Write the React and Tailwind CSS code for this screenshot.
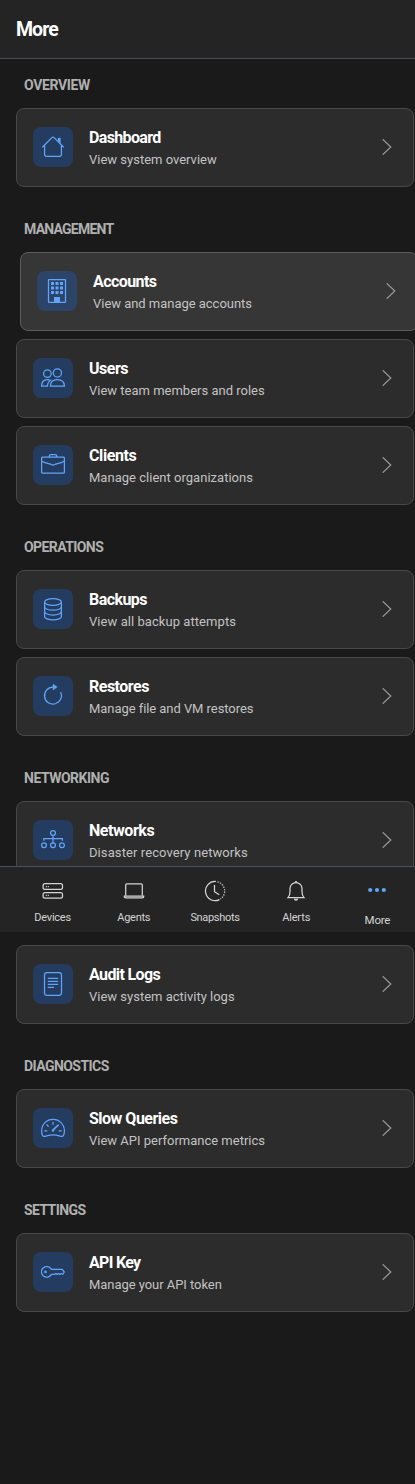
import React from 'react';

const HomeIcon = () => (
  <>
    <path d="M1.3 12.3 10.9 2.6a1.5 1.5 0 0 1 2.2 0l9.6 9.7" />
    <path d="M3.6 10.3v9.2a1.8 1.8 0 0 0 1.8 1.8h13.2a1.8 1.8 0 0 0 1.8-1.8v-9.2" />
    <path d="M17 3h2.4v5.2L17 5.8z" fill="currentColor" strokeWidth="0.4" />
  </>
);

const BuildingIcon = () => (
  <>
    <rect x="3.5" y="0.6" width="17" height="22.8" rx="0.6" />
    <path
      d="M6 3h3v3H6zM10.5 3h3v3h-3zM15 3h3v3h-3zM6 7.5h3v3H6zM10.5 7.5h3v3h-3zM15 7.5h3v3h-3zM6 12h3v3H6zM10.5 12h3v3h-3zM15 12h3v3h-3zM9 18h6v5.5H9z"
      fill="currentColor"
      stroke="none"
    />
  </>
);

const UsersIcon = () => (
  <>
    <circle cx="16.4" cy="6.9" r="4.1" />
    <circle cx="6.4" cy="7.6" r="3.8" />
    <path d="M9.4 20.2c0-4 2.6-6.7 7-6.7s7 2.7 7 6.7z" />
    <path d="M9.6 14.2c-1-.5-2-.7-3.2-.7-3.6 0-5.8 2.5-5.8 6.7h5.9c0-2.8 1.1-4.8 3.1-6z" />
  </>
);

const BriefcaseIcon = () => (
  <>
    <rect x="0.6" y="4.2" width="22.8" height="16" rx="1.2" />
    <path d="M8.3 4.2V3a1.5 1.5 0 0 1 1.5-1.5h4.4A1.5 1.5 0 0 1 15.7 3v1.2" />
    <path d="M.6 8.3c3.4 1.7 6.6 2.3 9 2.9.8.2 1 .8 2.4.8s1.6-.6 2.4-.8c2.4-.6 5.6-1.2 9-2.9" />
  </>
);

const DatabaseIcon = () => (
  <>
    <ellipse cx="12" cy="5" rx="8.4" ry="3.3" />
    <path d="M3.6 5v14.5c0 1.900 3.700 3.400 8.400 3.400s8.400-1.500 8.400-3.400V5" />
    <path d="M3.600 9.800c0 1.900 3.700 3.400 8.400 3.400s8.400-1.500 8.400-3.400M3.600 14.600c0 1.900 3.700 3.400 8.400 3.400s8.400-1.500 8.400-3.400" />
  </>
);

const RestoreIcon = () => (
  <>
    <path d="M13 3.1h-1a8.500 8.500 0 1 0 7.700 4.900" />
    <path d="M12 .1v6L16.300 3.100z" fill="currentColor" strokeWidth="0.4" />
  </>
);

const NetworkIcon = () => (
  <>
    <circle cx="12" cy="5" r="2.4" />
    <circle cx="3" cy="17.300" r="2.400" />
    <circle cx="12" cy="17.300" r="2.400" />
    <circle cx="21" cy="17.300" r="2.400" />
    <path d="M12 7.500v7.300M2.800 12.800v-2.100h18.600v2.100" />
  </>
);

const DocumentIcon = () => (
  <>
    <rect x="3.5" y="0.6" width="17" height="22.8" rx="2.3" />
    <path d="M6.800 6.300h10.400M6.800 9.300h10.400M6.800 12.300h10.400M6.800 15.400h6.200" />
  </>
);

const GaugeIcon = () => (
  <>
    <path d="M2.900 20.400C1.300 20.500.6 17.300.6 14.800.6 8.300 5.700 3.300 12 3.300s11.400 5 11.400 11.500c0 2.500-.7 5.700-2.300 5.600-2.300-.1-4.400-1.500-9.100-1.500s-6.800 1.400-9.100 1.500z" />
    <path d="M12 5.800v3M5.600 8.500l2 2.200M3.300 14.800h3M17.700 14.800h3" />
    <path d="m17.700 8.600-5.900 5.600M13.200 13.100l-1.500 1.900" strokeWidth="1.600" />
    <circle cx="12" cy="14.600" r="1.200" fill="currentColor" stroke="none" />
  </>
);

const KeyIcon = () => (
  <>
    <path d="M10.400 9.400h10.800L23.300 12l-1.700 2.300-1.300-.8-1.300.9-1.400-.9-1.400.9-1.400-.9-1.300.9h-3.100a5.300 5.300 0 1 1 0-5z" strokeLinejoin="round" />
    <circle cx="4.400" cy="11.900" r="1.300" fill="currentColor" stroke="none" />
  </>
);

const SECTIONS = [
  {
    label: 'OVERVIEW',
    track: 'tracking-[-0.35px]',
    items: [
      { title: 'Dashboard', tt: 'tracking-[-0.65px]', text: 'View system overview', dt: 'tracking-normal', Icon: HomeIcon },
    ],
  },
  {
    label: 'MANAGEMENT',
    track: 'tracking-[-0.75px]',
    items: [
      { title: 'Accounts', tt: 'tracking-[-0.57px]', text: 'View and manage accounts', dt: 'tracking-[-0.03px]', Icon: BuildingIcon, active: true },
      { title: 'Users', tt: 'tracking-[-0.5px]', text: 'View team members and roles', dt: 'tracking-normal', Icon: UsersIcon },
      { title: 'Clients', tt: 'tracking-[-0.4px]', text: 'Manage client organizations', dt: 'tracking-[0.02px]', Icon: BriefcaseIcon },
    ],
  },
  {
    label: 'OPERATIONS',
    track: 'tracking-[-0.58px]',
    items: [
      { title: 'Backups', tt: 'tracking-[-0.55px]', text: 'View all backup attempts', dt: 'tracking-[0.06px]', Icon: DatabaseIcon },
      { title: 'Restores', tt: 'tracking-[-0.5px]', text: 'Manage file and VM restores', dt: 'tracking-[-0.06px]', Icon: RestoreIcon },
    ],
  },
  {
    label: 'NETWORKING',
    track: 'tracking-[-0.5px]',
    items: [
      { title: 'Networks', tt: 'tracking-[-0.45px]', text: 'Disaster recovery networks', dt: 'tracking-[0.09px]', Icon: NetworkIcon },
    ],
  },
  {
    label: '',
    track: 'tracking-normal',
    items: [
      { title: 'Audit Logs', tt: 'tracking-[-0.62px]', text: 'View system activity logs', dt: 'tracking-normal', Icon: DocumentIcon },
    ],
  },
  {
    label: 'DIAGNOSTICS',
    track: 'tracking-[-0.55px]',
    items: [
      { title: 'Slow Queries', tt: 'tracking-[-0.5px]', text: 'View API performance metrics', dt: 'tracking-normal', Icon: GaugeIcon },
    ],
  },
  {
    label: 'SETTINGS',
    track: 'tracking-[-0.6px]',
    items: [
      { title: 'API Key', tt: 'tracking-[-0.7px]', text: 'Manage your API token', dt: 'tracking-[-0.05px]', Icon: KeyIcon },
    ],
  },
];

function MenuCard({ title, tt, text, dt, Icon, active }) {
  return (
    <a
      className={
        'flex h-[79px] w-[398px] items-center rounded-lg border px-4 ' +
        (active ? 'translate-x-1 border-[#5c5c5c] bg-[#363636]' : 'border-[#484848] bg-[#2c2c2c]')
      }
    >
      <span
        className={
          'mb-px flex size-10 shrink-0 items-center justify-center rounded-lg text-[#60a5fa] ' +
          (active ? 'bg-[#2c4468]' : 'bg-[#253c61]')
        }
      >
        <svg className="size-6" viewBox="0 0 24 24" fill="none" stroke="currentColor" strokeWidth="1.25">
          <Icon />
        </svg>
      </span>
      <span className="ml-4 flex flex-1 flex-col pb-0.5 whitespace-nowrap">
        <span className={'text-base leading-[26px] font-bold text-white ' + tt}>{title}</span>
        <span className={'text-[13px] leading-[17px] text-[#c3c3c3] ' + dt}>{text}</span>
      </span>
      <svg className="mr-[5px] mb-px h-4 w-[10px]" viewBox="0 0 10 16" fill="none" stroke="#999999" strokeWidth="1.2">
        <path d="m.7.3 8.100 7.700L.7 15.700" />
      </svg>
    </a>
  );
}

const TABS = [
  {
    name: 'Devices',
    track: 'tracking-[-0.25px]',
    art: (
      <>
        <rect x="2.1" y="4.7" width="19.4" height="5.6" rx="1.9" />
        <rect x="2.1" y="13.5" width="19.4" height="5.6" rx="1.9" />
        <path d="M4.800 7.500h1M6.800 7.500h1M4.800 16.300h1M6.800 16.300h1" />
      </>
    ),
  },
  {
    name: 'Agents',
    track: 'tracking-[-0.25px]',
    art: (
      <>
        <path d="M3.700 16.700V6a1.200 1.200 0 0 1 1.200-1.200h14.200A1.200 1.200 0 0 1 20.300 6v10.700" />
        <path d="M2.300 17.200h19.400v.5c0 .8-.6 1.100-1.400 1.100H3.700c-.8 0-1.400-.3-1.400-1.100z" />
      </>
    ),
  },
  {
    name: 'Snapshots',
    track: 'tracking-[-0.32px]',
    art: (
      <>
        <path d="M13 2.500A9.600 9.600 0 1 0 16.500 20.600" />
        <path d="M14.500 2.800A9.600 9.600 0 0 1 17.500 20" strokeDasharray="1.300 1.300" />
        <path d="M11.500 6v6.700l4.800 3.100" />
      </>
    ),
  },
  {
    name: 'Alerts',
    track: 'tracking-[-0.15px]',
    art: (
      <>
        <path d="M4 18.600c1.500-1.600 2-3.100 2-6.100V9.700C6 6.300 8.500 3.700 12 3.700s6 2.600 6 6v2.800c0 3 .5 4.500 2 6.100z" />
        <path d="M12 2v1.600" strokeWidth="1.700" />
        <path d="M9.800 19.800h4.400c-.2 1.300-1 2-2.200 2s-2-.7-2.200-2z" fill="currentColor" stroke="none" />
      </>
    ),
  },
];

export default function App() {
  return (
    <div className="relative h-[1484px] w-full overflow-hidden bg-[#1a1a1a] font-['Roboto',sans-serif]">
      <header className="flex h-[59px] items-center border-b border-[#4a4d58] bg-[#242424] px-4 pt-px">
        <h1 className="text-[19.5px] leading-7 font-bold tracking-[-0.95px] text-white">More</h1>
      </header>

      <main className="flex flex-col gap-8 px-4 pt-4">
        {SECTIONS.map((s, i) => (
          <section key={i}>
            <h2 className={'mb-[13px] h-5 px-2 text-sm leading-5 font-bold text-[#b0b0b0] ' + s.track}>{s.label}</h2>
            <div className="flex flex-col gap-2">
              {s.items.map((item) => (
                <MenuCard key={item.title} {...item} />
              ))}
            </div>
          </section>
        ))}
      </main>

      <nav className="absolute top-[866px] left-0 flex h-[66px] w-full border-t border-[#4b5058] bg-[#242424] pl-3">
        {TABS.map((t) => (
          <a key={t.name} className="flex w-[81.2px] shrink-0 flex-col items-center pt-3 text-[#d4d4d4]">
            <svg className="size-6" viewBox="0 0 24 24" fill="none" stroke="currentColor" strokeWidth="1.25">
              {t.art}
            </svg>
            <span className={'mt-[7px] text-[11px] leading-4 ' + t.track}>{t.name}</span>
          </a>
        ))}
        <a className="flex w-[81.2px] shrink-0 flex-col items-center pt-[11px] text-[#d4d4d4]">
          <svg className="size-6 text-[#60a5fa]" viewBox="0 0 24 24" fill="currentColor">
            <circle cx="5.2" cy="12" r="2.1" />
            <circle cx="12" cy="12" r="2.1" />
            <circle cx="18.8" cy="12" r="2.1" />
          </svg>
          <span className="mt-2.5 text-[11.5px] leading-4 tracking-[-0.25px]">More</span>
        </a>
      </nav>
    </div>
  );
}
